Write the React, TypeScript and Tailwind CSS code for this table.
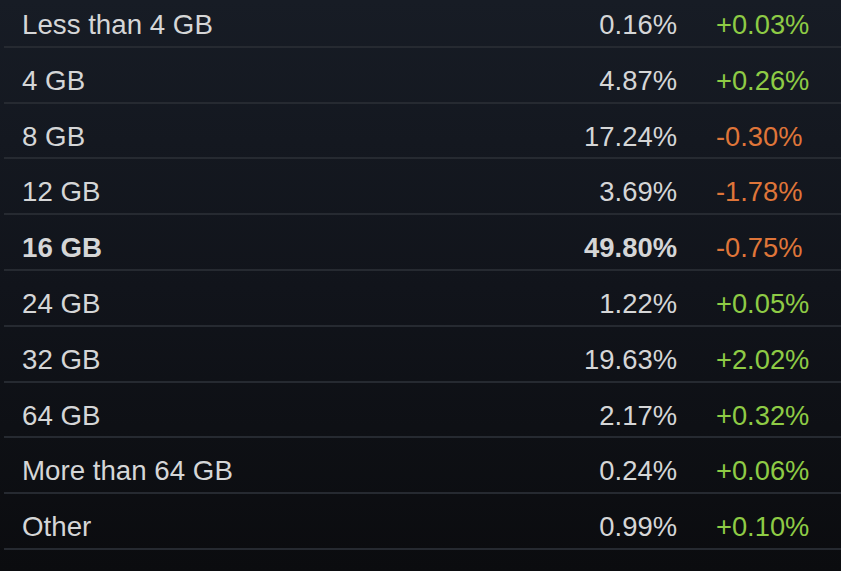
import React from "react";

type Row = { label: string; pct: string; change: string; bold?: boolean };

const rows: Row[] = [
  { label: "Less than 4 GB", pct: "0.16%", change: "+0.03%" },
  { label: "4 GB", pct: "4.87%", change: "+0.26%" },
  { label: "8 GB", pct: "17.24%", change: "-0.30%" },
  { label: "12 GB", pct: "3.69%", change: "-1.78%" },
  { label: "16 GB", pct: "49.80%", change: "-0.75%", bold: true },
  { label: "24 GB", pct: "1.22%", change: "+0.05%" },
  { label: "32 GB", pct: "19.63%", change: "+2.02%" },
  { label: "64 GB", pct: "2.17%", change: "+0.32%" },
  { label: "More than 64 GB", pct: "0.24%", change: "+0.06%" },
  { label: "Other", pct: "0.99%", change: "+0.10%" },
];

export default function App() {
  return (
    <div
      className="w-[841px] h-[571px] overflow-hidden bg-gradient-to-b from-[#171c25] via-[#11141b] to-[#0b0c0f] pl-[4px] leading-[30px] text-[#d5d6d7]"
      style={{ fontFamily: '"Liberation Sans", Arial, sans-serif' }}
    >
      <div className="-mt-[8px] flex flex-col">
        {rows.map((r) => (
          <div
            key={r.label}
            className="flex h-[55.8px] shrink-0 items-start border-b-2 border-[#262a31] pt-[18px]"
          >
            <div className={`flex-1 pl-[18px] text-[27.7px] ${r.bold ? "font-bold" : ""}`}>{r.label}</div>
            <div className={`text-right text-[27.4px] ${r.bold ? "font-bold" : ""}`}>{r.pct}</div>
            <div
              className={`ml-[39px] w-[125px] text-[27.3px] ${
                r.change.startsWith("-") ? "text-[#df7539]" : "text-[#8ecb45]"
              }`}
            >
              {r.change}
            </div>
          </div>
        ))}
      </div>
    </div>
  );
}
